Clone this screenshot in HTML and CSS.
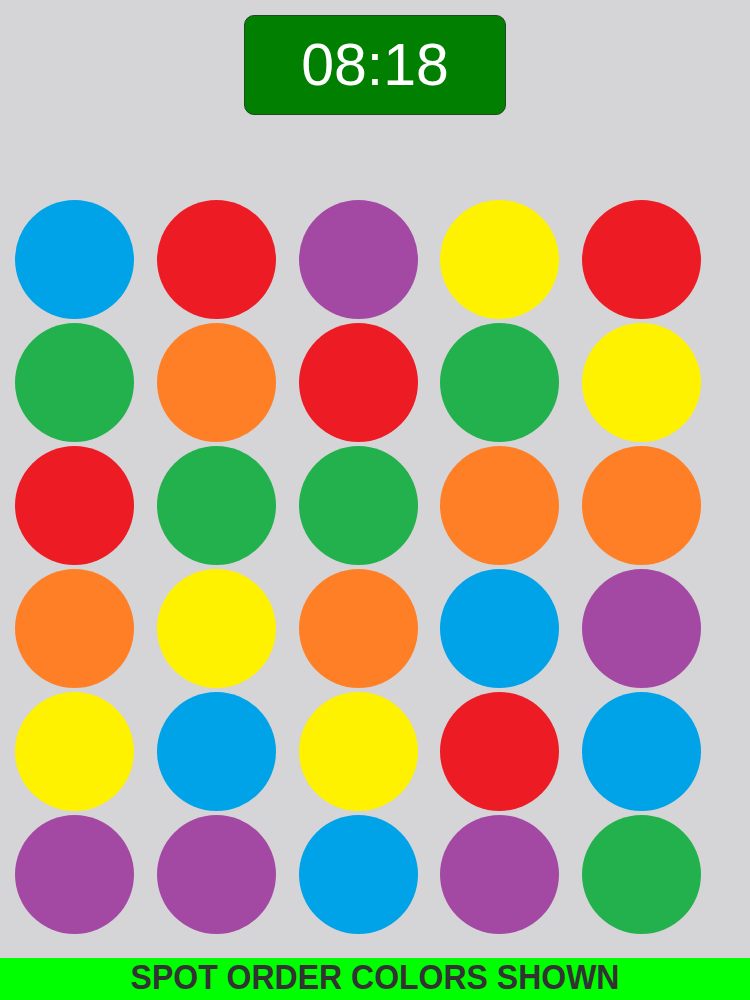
FILE: index.html
```html
<!DOCTYPE html>
<html>
<head>
<meta charset="utf-8">
<link rel="stylesheet" href="styles.css">
</head>
<body>
<div class="page">
  <header class="top">
    <div class="timer">08:18</div>
  </header>
  <main class="grid">
    <div class="dot blue"></div><div class="dot red"></div><div class="dot purple"></div><div class="dot yellow"></div><div class="dot red"></div>
    <div class="dot green"></div><div class="dot orange"></div><div class="dot red"></div><div class="dot green"></div><div class="dot yellow"></div>
    <div class="dot red"></div><div class="dot green"></div><div class="dot green"></div><div class="dot orange"></div><div class="dot orange"></div>
    <div class="dot orange"></div><div class="dot yellow"></div><div class="dot orange"></div><div class="dot blue"></div><div class="dot purple"></div>
    <div class="dot yellow"></div><div class="dot blue"></div><div class="dot yellow"></div><div class="dot red"></div><div class="dot blue"></div>
    <div class="dot purple"></div><div class="dot purple"></div><div class="dot blue"></div><div class="dot purple"></div><div class="dot green"></div>
  </main>
  <footer class="bar"><span class="bar-text">SPOT ORDER COLORS SHOWN</span></footer>
</div>
</body>
</html>
```
FILE: styles.css
```css
html, body {
  margin: 0;
  padding: 0;
}
body {
  background: #d5d4d6;
  font-family: "Liberation Sans", Arial, sans-serif;
}
.page {
  width: 750px;
  height: 1000px;
  display: flex;
  flex-direction: column;
  overflow: hidden;
}
.top {
  display: flex;
  justify-content: center;
  padding-top: 15px;
}
.timer {
  box-sizing: border-box;
  width: 262px;
  height: 100px;
  background: #017f01;
  border: 1px solid #1f4a1f;
  border-radius: 10px;
  color: #ffffff;
  font-size: 59px;
  line-height: 98px;
  text-align: center;
}
.grid {
  margin-top: 85px;
  padding-left: 15px;
  display: grid;
  grid-template-columns: repeat(5, 119px);
  column-gap: 22.75px;
  row-gap: 4px;
}
.dot {
  width: 119px;
  height: 119px;
  border-radius: 50%;
}
.blue { background: #00a2e8; }
.red { background: #ed1c24; }
.purple { background: #a349a4; }
.yellow { background: #fff200; }
.green { background: #22b14c; }
.orange { background: #ff7f27; }
.bar {
  margin-top: auto;
  height: 42px;
  background: #00ff00;
  color: #333333;
  font-weight: bold;
  font-size: 32px;
  line-height: 42px;
  text-align: center;
}
.bar-text {
  display: inline-block;
  transform: translateY(-2px) scaleY(1.1);
}
```
